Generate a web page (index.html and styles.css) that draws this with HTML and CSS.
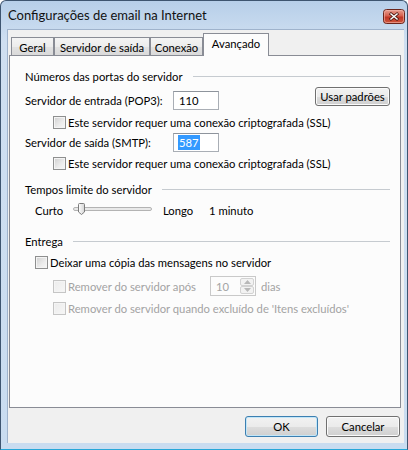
FILE: index.html
```html
<!DOCTYPE html>
<html lang="pt-BR">
<head>
    <meta charset="UTF-8">
    <title>Configurações de email na Internet</title>
    <link rel="stylesheet" href="styles.css">
</head>
<body>
    <div class="window">
        <div class="titlebar">
            <span class="title">Configurações de email na Internet</span>
            <span class="close-btn" title="Fechar">
                <svg width="22" height="15" viewBox="0 0 22 15">
                    <defs>
                        <linearGradient id="redfill" x1="0" y1="0" x2="0" y2="1">
                            <stop offset="0" stop-color="#e8a194"/>
                            <stop offset="0.45" stop-color="#d6604e"/>
                            <stop offset="0.55" stop-color="#bf3626"/>
                            <stop offset="1" stop-color="#d0593f"/>
                        </linearGradient>
                    </defs>
                    <rect x="0.5" y="0.5" width="21" height="14" rx="3" fill="url(#redfill)" stroke="#6b261d"/>
                    <rect x="1.5" y="1.5" width="19" height="12" rx="2" fill="none" stroke="#f2b7ad" stroke-opacity="0.6"/>
                    <path d="M8 5 L14 10 M14 5 L8 10" stroke="#4a1a12" stroke-width="3" stroke-linecap="square"/>
                    <path d="M8 5 L14 10 M14 5 L8 10" stroke="#ffffff" stroke-width="1.5" stroke-linecap="square"/>
                </svg>
            </span>
        </div>

        <div class="client">
            <div class="tabs">
                <div class="tab tab-geral">Geral</div>
                <div class="tab tab-saida">Servidor de saída</div>
                <div class="tab tab-conexao">Conexão</div>
                <div class="tab tab-active">Avançado</div>
            </div>

            <div class="panel">
                <div class="group-head head-ports"><span>Números das portas do servidor</span><i class="rule"></i></div>

                <div class="port-row row-pop3">
                    <span class="port-label">Servidor de entrada (POP3):</span>
                    <div class="textbox">110</div>
                    <button class="btn btn-defaults">Usar padrões</button>
                </div>
                <div class="check-row deep row-ssl1"><span class="cb"></span>Este servidor requer uma conexão criptografada (SSL)</div>

                <div class="port-row row-smtp">
                    <span class="port-label">Servidor de saída (SMTP):</span>
                    <div class="textbox"><span class="selected">587</span></div>
                </div>
                <div class="check-row deep row-ssl2"><span class="cb"></span>Este servidor requer uma conexão criptografada (SSL)</div>

                <div class="group-head head-timeout"><span>Tempos limite do servidor</span><i class="rule"></i></div>

                <div class="slider-row">
                    <span class="slider-min">Curto</span>
                    <svg class="slider" width="86" height="16" viewBox="0 0 86 16">
                        <defs>
                            <linearGradient id="thumb" x1="0" y1="0" x2="1" y2="0">
                                <stop offset="0" stop-color="#ffffff"/>
                                <stop offset="1" stop-color="#d4d4d4"/>
                            </linearGradient>
                        </defs>
                        <rect x="3.5" y="5.5" width="78" height="3" rx="1.5" fill="#e9e9e9" stroke="#b3b3b3"/>
                        <path d="M8.5 2.5 Q8.5 1.5 9.5 1.5 H13.5 Q14.5 1.5 14.5 2.5 V10 L11.5 12.5 L8.5 10 Z" fill="url(#thumb)" stroke="#7c7c7c"/>
                    </svg>
                    <span class="slider-max">Longo</span>
                    <span>1 minuto</span>
                </div>

                <div class="group-head head-delivery"><span>Entrega</span><i class="rule"></i></div>

                <div class="check-row row-keep"><span class="cb"></span>Deixar uma cópia das mensagens no servidor</div>

                <div class="check-row deep disabled row-after">
                    <span class="cb"></span>
                    <span class="after-label">Remover do servidor após</span>
                    <div class="spinner">
                        <span class="spin-value">10</span>
                        <div class="spin-buttons">
                            <span class="spin-btn"><svg width="7" height="4" viewBox="0 0 7 4"><path d="M0 4 L3.5 0 L7 4 Z" fill="#b8b8b8"/></svg></span>
                            <span class="spin-btn"><svg width="7" height="4" viewBox="0 0 7 4"><path d="M0 0 L3.5 4 L7 0 Z" fill="#b8b8b8"/></svg></span>
                        </div>
                    </div>
                    <span class="days">dias</span>
                </div>
                <div class="check-row deep disabled row-deleted"><span class="cb"></span>Remover do servidor quando excluído de 'Itens excluídos'</div>
            </div>

            <div class="actions">
                <button class="btn btn-ok">OK</button>
                <button class="btn btn-cancel">Cancelar</button>
            </div>
        </div>
    </div>
</body>
</html>
```

FILE: styles.css
```css
body {
    margin: 0;
    font-family: Lato, "Liberation Sans", sans-serif;
    font-size: 11.25px;
    color: #000;
}

.window {
    width: 408px;
    height: 450px;
    box-sizing: border-box;
    display: flex;
    flex-direction: column;
    padding: 0 3px 6px 7px;
    border: 1px solid #3e5570;
    border-bottom-color: #27a7d8;
    border-radius: 6px 6px 0 0;
    background: linear-gradient(to bottom, #b7cfe9 0%, #cfdff1 40px, #c9dcf0 100%);
}

/* title bar */
.titlebar {
    height: 28px;
    display: flex;
    align-items: flex-start;
    margin-right: -3px;
}

.title {
    flex: 1;
    margin-top: 6px;
    font-size: 13px;
    color: #111;
}

.close-btn {
    display: block;
    width: 22px;
    height: 15px;
    margin-top: 8px;
    margin-right: 2px;
}

.close-btn svg {
    display: block;
}

/* client area */
.client {
    flex: 1;
    display: flex;
    flex-direction: column;
    background: #f0f0f0;
    border: 1px solid #9fb3cc;
    border-width: 1px 0 0 1px;
    margin-left: -1px;
}

.tabs {
    height: 22px;
    margin-top: 3px;
    padding-left: 3px;
    display: flex;
    align-items: flex-end;
}

.tab {
    box-sizing: border-box;
    height: 18px;
    display: flex;
    align-items: center;
    justify-content: center;
    border: 1px solid #898c95;
    border-bottom: none;
    background: linear-gradient(to bottom, #f4f4f4 0%, #ececec 50%, #e2e2e2 51%, #dadada 100%);
    padding-top: 1px;
    white-space: nowrap;
}

.tab-geral { width: 43px; }
.tab-saida { width: 96px; }
.tab-conexao { width: 53px; }

.tab-active {
    width: 66px;
    height: 23px;
    margin-bottom: -1px;
    position: relative;
    z-index: 1;
    background: #fcfcfc;
    align-items: flex-start;
    padding-top: 3px;
}

.panel {
    height: 353px;
    box-sizing: border-box;
    margin: 0 3px 0 1px;
    padding: 0 10px 0 15px;
    border: 1px solid #898c95;
    background: #fcfcfc;
    display: flex;
    flex-direction: column;
}

/* group headings */
.group-head {
    height: 16px;
    display: flex;
    align-items: center;
    gap: 10px;
}

.rule {
    flex: 1;
    height: 1px;
    background: #c6cbd0;
}

.head-ports { margin-top: 12px; }
.head-timeout { margin-top: 11px; }
.head-delivery { margin-top: 15px; }

/* port rows */
.port-row {
    display: flex;
    align-items: flex-start;
}

.row-pop3 { height: 23px; margin-top: 3px; }
.row-smtp { height: 19px; margin-top: 4px; }

.port-label {
    width: 148px;
    line-height: 19px;
}

.row-pop3 .port-label,
.row-pop3 .textbox { margin-top: 4px; }

.textbox {
    box-sizing: border-box;
    width: 46px;
    height: 19px;
    padding-left: 5px;
    line-height: 17px;
    border: 1px solid #a9aeb5;
    border-top-color: #8e949c;
    background: #fff;
}

.selected {
    background: #3399ff;
    color: #fff;
    margin-left: -1px;
    padding: 1px 1px;
}

/* buttons */
.btn {
    box-sizing: border-box;
    height: 20px;
    padding: 0;
    font: inherit;
    color: #000;
    border: 1px solid #707070;
    border-radius: 3px;
    background: linear-gradient(to bottom, #f2f2f2 0%, #ebebeb 50%, #dddddd 51%, #cfcfcf 100%);
    box-shadow: inset 0 0 0 1px #fbfbfb;
}

.btn-defaults {
    width: 75px;
    height: 19px;
    margin-left: auto;
}

/* check rows */
.check-row {
    display: flex;
    align-items: center;
    height: 13px;
    padding-left: 10px;
    white-space: nowrap;
}

.check-row.deep { padding-left: 28px; }

.row-ssl1 { margin-top: 6px; }
.row-ssl2 { margin-top: 5px; }
.row-keep { margin-top: 7px; }
.row-after { margin-top: 7px; height: 20px; }
.row-deleted { margin-top: 6px; }

.cb {
    box-sizing: border-box;
    width: 13px;
    height: 13px;
    margin-right: 2px;
    flex: none;
    border: 1px solid #8e8f8f;
    background: linear-gradient(135deg, #cfcfcf 0%, #ececec 60%, #f7f7f7 100%);
    box-shadow: inset 0 0 0 1px #f4f4f4;
}

.disabled { color: #a3a3a3; }

.disabled .cb {
    border-color: #c5c5c5;
    background: linear-gradient(135deg, #ececec 0%, #f6f6f6 100%);
}

/* slider */
.slider-row {
    height: 16px;
    margin-top: 5px;
    padding-left: 10px;
    display: flex;
    align-items: center;
}

.slider-min { width: 35px; }
.slider-max { width: 46px; margin-left: 7px; }

/* spinner */
.after-label { width: 142px; }

.spinner {
    box-sizing: border-box;
    width: 46px;
    height: 20px;
    display: flex;
    align-items: center;
    justify-content: space-between;
    padding: 1px 1px 1px 5px;
    border: 1px solid #c9c9c9;
    background: #fcfcfc;
}

.spin-buttons {
    display: flex;
    flex-direction: column;
    height: 16px;
}

.spin-btn {
    box-sizing: border-box;
    width: 14px;
    height: 8px;
    display: flex;
    align-items: center;
    justify-content: center;
    border: 1px solid #d2d2d2;
    border-radius: 2px;
    background: #f2f2f2;
}

.days { margin-left: 5px; }

/* dialog buttons */
.actions {
    margin-top: 8px;
    padding-right: 4px;
    display: flex;
    justify-content: flex-end;
    gap: 8px;
}

.btn-ok {
    width: 73px;
    height: 21px;
    border-color: #3c7fb1;
    box-shadow: inset 0 0 0 1px #c2e6f8;
}

.btn-cancel {
    width: 74px;
    height: 21px;
}
```
